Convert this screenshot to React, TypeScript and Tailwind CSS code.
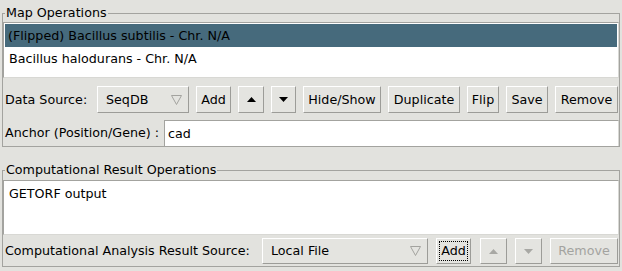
import React from 'react';

const btnBase =
  "h-full shrink-0 flex items-center bg-[#e4e4e0] border border-t-white border-l-white border-r-[#9c9c98] border-b-[#9c9c98]";
const btn = `${btnBase} justify-center`;

function Arrow({ up, disabled }: { up?: boolean; disabled?: boolean }) {
  return (
    <svg width="9" height="5" viewBox="0 0 9 5">
      <polygon
        points={up ? "0,5 9,5 4.5,0" : "0,0 9,0 4.5,5"}
        fill={disabled ? "#a8a8a4" : "#000"}
      />
    </svg>
  );
}

function Combo({ label, w }: { label: string; w: string }) {
  return (
    <div className={`${btnBase} ${w} justify-between pl-[8px] pr-[6px]`}>
      <span>{label}</span>
      <svg width="11" height="10" viewBox="0 0 11 10">
        <polygon points="0.5,0.5 10.5,0.5 5.5,9.5" fill="none" stroke="#a3a39f" />
      </svg>
    </div>
  );
}

function Frame({ title, children }: { title: string; children: React.ReactNode }) {
  return (
    <fieldset className="border border-[#a3a39f] mx-[2px] w-[618px]">
      <legend className="ml-[2px] px-[1px] leading-[16px]">{title}</legend>
      {children}
    </fieldset>
  );
}

export default function App() {
  return (
    <div
      className="w-[622px] h-[271px] bg-[#e2e2de] pt-[5px] text-[12.7px] text-black overflow-hidden"
      style={{ fontFamily: '"DejaVu Sans", sans-serif' }}
    >
      <Frame title="Map Operations">
        {/* map list */}
        <div className="mt-[1px] h-[56px] bg-white border border-[#a3a39f] border-r-[#d8d8d4] border-b-[#d8d8d4] p-[1px]">
          <div className="h-[23px] bg-[#466a7c] flex items-center pl-[3px]">
            (Flipped) Bacillus subtilis - Chr. N/A
          </div>
          <div className="h-[23px] flex items-center pl-[4px]">Bacillus halodurans - Chr. N/A</div>
        </div>

        <div className="mt-[8px] h-[27px] flex items-center gap-[7px]">
          <span className="ml-[2px] w-[85px] shrink-0">Data Source:</span>
          <Combo label="SeqDB" w="w-[92px]" />
          <div className={`${btn} w-[35px]`}>Add</div>
          <div className={`${btn} w-[26px]`}><Arrow up /></div>
          <div className={`${btn} w-[25px]`}><Arrow /></div>
          <div className={`${btn} w-[78px]`}>Hide/Show</div>
          <div className={`${btn} w-[72px]`}>Duplicate</div>
          <div className={`${btn} w-[32px]`}>Flip</div>
          <div className={`${btn} w-[42px]`}>Save</div>
          <div className={`${btn} w-[63px]`}>Remove</div>
        </div>

        <div className="mt-[7px] h-[26px] flex items-stretch">
          <span className="ml-[2px] w-[159px] shrink-0 flex items-center whitespace-nowrap">Anchor (Position/Gene) :</span>
          <div className="flex-1 bg-white border border-[#a3a39f] border-b-0 border-r-[#d8d8d4] flex items-center pl-[3px]">
            cad
          </div>
        </div>
      </Frame>

      <div className="h-[15px]" />

      <Frame title="Computational Result Operations">
        <div className="mt-[2px] h-[55px] bg-white border border-[#a3a39f] border-r-[#d8d8d4] border-b-[#d8d8d4] p-[1px]">
          <div className="h-[23px] flex items-center pl-[4px]">GETORF output</div>
        </div>

        <div className="mt-[3px] mb-[2px] h-[26px] flex items-center">
          <span className="ml-[2px] w-[257px] shrink-0 whitespace-nowrap">Computational Analysis Result Source:</span>
          <Combo label="Local File" w="w-[166px]" />
          <div className={`${btn} w-[35px] ml-[8px] p-[2px]`}>
            <span className="w-full h-full border border-dotted border-black flex items-center justify-center">Add</span>
          </div>
          <div className={`${btn} w-[27px] ml-[9px]`}><Arrow up disabled /></div>
          <div className={`${btn} w-[27px] ml-[8px]`}><Arrow disabled /></div>
          <div className={`${btn} w-[68px] ml-[8px] text-[#a3a39f]`}>Remove</div>
        </div>
      </Frame>
    </div>
  );
}
